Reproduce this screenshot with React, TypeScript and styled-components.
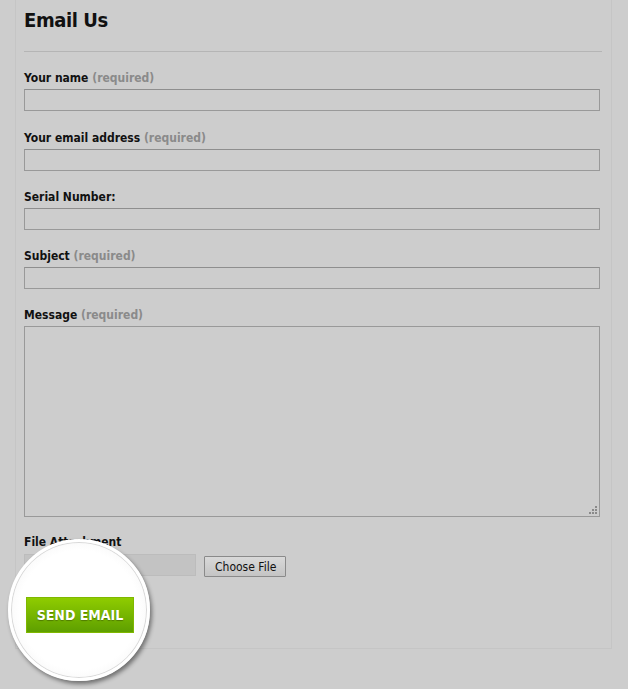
import React from "react";
import styled, {createGlobalStyle} from "styled-components";

//#region Style Definitions
const GlobalStyle = createGlobalStyle`
    html, body {
        margin: 0;
        padding: 0;
        background: #cdcdcd;
    }
    body {
        font-family: "DejaVu Sans Condensed", "DejaVu Sans", Tahoma, sans-serif;
        color: #111111;
    }
`;

const Page = styled.div`
    width: 628px;
    height: 689px;
    overflow: hidden;
`;

const Panel = styled.form`
    margin-left: 15px;
    width: 597px;
    box-sizing: border-box;
    padding: 0 9px 15px 8px;
    border: 1px solid #c5c5c5;
    border-top: none;
`;

const Title = styled.h1`
    margin: 0;
    padding-top: 8px;
    font-size: 20px;
    line-height: 24px;
    font-weight: bold;
    letter-spacing: -0.4px;
    color: #111111;
`;

const Rule = styled.hr`
    margin: 19px 0 18px 0;
    border: none;
    border-top: 1px solid #b5b5b5;
    height: 0;
`;

const Field = styled.div<{$space?: number}>`
    display: flex;
    flex-direction: column;
    gap: 3px;
    margin-bottom: ${(p) => (p.$space ?? 18)}px;
`;

const Label = styled.label`
    font-size: 12px;
    line-height: 16px;
    font-weight: bold;
`;

const Hint = styled.span`
    color: #8a8a8a;
`;

const TextInput = styled.input`
    width: 576px;
    height: 22px;
    box-sizing: border-box;
    margin: 0;
    border: 1px solid #999999;
    border-top-color: #8e8e8e;
    background: transparent;
    outline: none;
`;

const AreaWrap = styled.div`
    position: relative;
    width: 576px;
    height: 191px;
`;

const TextArea = styled.textarea`
    display: block;
    width: 100%;
    height: 100%;
    box-sizing: border-box;
    margin: 0;
    border: 1px solid #999999;
    background: transparent;
    resize: none;
    outline: none;
`;

const Grip = styled.svg`
    position: absolute;
    right: 3px;
    bottom: 3px;
`;

const FileRow = styled.div`
    display: flex;
    align-items: flex-start;
    gap: 8px;
    margin-top: 1px;
`;

const FileBox = styled.div`
    width: 172px;
    height: 22px;
    box-sizing: border-box;
    background: #c3c3c3;
    border: 1px solid #bcbcbc;
`;

const ChooseButton = styled.button`
    height: 21px;
    margin-top: 2px;
    padding: 0 9px 0 10px;
    font-family: "DejaVu Sans Condensed", "DejaVu Sans", Tahoma, sans-serif;
    font-size: 12px;
    color: #111111;
    border: 1px solid #8a8a8a;
    border-radius: 1px;
    background: linear-gradient(#d9d9d9, #c4c4c4);
`;

const SendArea = styled.div`
    position: relative;
    margin-top: 20px;
    margin-left: 2px;
    height: 36px;
`;

const Spotlight = styled.div`
    position: absolute;
    left: -18px;
    top: -58px;
    width: 142px;
    height: 142px;
    box-sizing: border-box;
    border-radius: 50%;
    border: 3px solid #ffffff;
    background: radial-gradient(circle, #ffffff 62%, #f3f3f3 85%, #e4e4e4 100%);
    box-shadow: inset 0 0 0 1px #d8d8d8, 2px 3px 4px rgba(0, 0, 0, 0.45);
`;

const SendButton = styled.button`
    position: relative;
    width: 108px;
    height: 36px;
    padding: 0;
    border: 1px solid #7fb800;
    background: linear-gradient(#8fcc00, #5e9f00);
    color: #ffffff;
    font-family: "DejaVu Sans Condensed", "DejaVu Sans", Tahoma, sans-serif;
    font-size: 14px;
    font-weight: bold;
    text-shadow: 0 1px 1px rgba(60, 90, 0, 0.6);
`;
//#endregion

const fields = [
    {label: "Your name", required: true, space: 19},
    {label: "Your email address", required: true, space: 18},
    {label: "Serial Number:", required: false, space: 18},
    {label: "Subject", required: true, space: 18},
];

function App() {
    return (
        <Page>
            <GlobalStyle/>
            <Panel onSubmit={(e) => e.preventDefault()}>
                <Title>Email Us</Title>
                <Rule/>
                {fields.map((f) => (
                    <Field key={f.label} $space={f.space}>
                        <Label>{f.label}{f.required && <Hint> (required)</Hint>}</Label>
                        <TextInput type="text"/>
                    </Field>
                ))}
                <Field $space={17}>
                    <Label>Message <Hint>(required)</Hint></Label>
                    <AreaWrap>
                        <TextArea/>
                        <Grip width="8" height="8" viewBox="0 0 8 8">
                            <rect x="6" y="0" width="2" height="2" fill="#8a8a8a"/>
                            <rect x="3" y="3" width="2" height="2" fill="#8a8a8a"/>
                            <rect x="6" y="3" width="2" height="2" fill="#8a8a8a"/>
                            <rect x="0" y="6" width="2" height="2" fill="#8a8a8a"/>
                            <rect x="3" y="6" width="2" height="2" fill="#8a8a8a"/>
                            <rect x="6" y="6" width="2" height="2" fill="#8a8a8a"/>
                        </Grip>
                    </AreaWrap>
                </Field>
                <Field $space={0}>
                    <Label>File Attachment</Label>
                    <FileRow>
                        <FileBox/>
                        <ChooseButton type="button">Choose File</ChooseButton>
                    </FileRow>
                </Field>
                <SendArea>
                    <Spotlight/>
                    <SendButton type="submit">SEND EMAIL</SendButton>
                </SendArea>
            </Panel>
        </Page>
    );
}

export default App;
